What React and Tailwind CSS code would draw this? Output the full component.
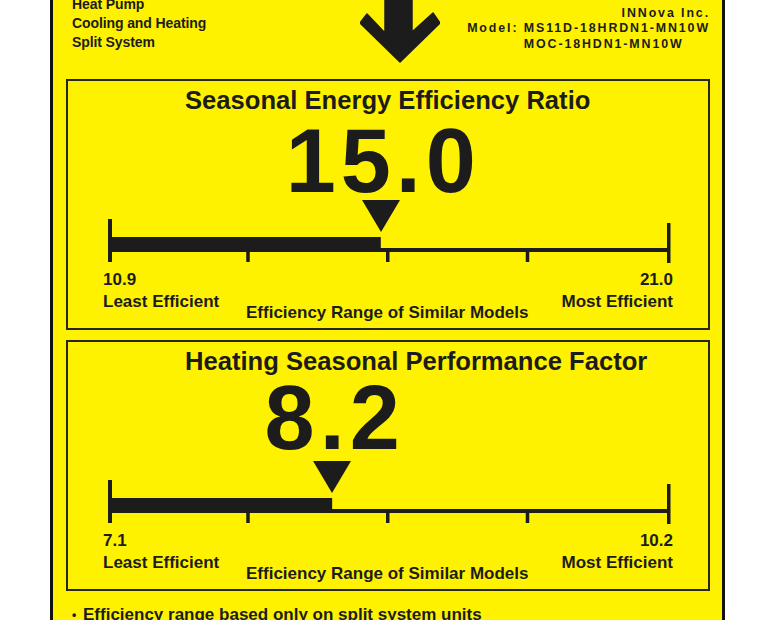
import React from 'react';

const ratings = [
  { id: 'seer', title: 'Seasonal Energy Efficiency Ratio', value: '15.0', min: '10.9', max: '21.0', fill: 0.488, valueClass: '' },
  { id: 'hspf', title: 'Heating Seasonal Performance Factor', value: '8.2', min: '7.1', max: '10.2', fill: 0.401, valueClass: '-translate-y-[4px]' },
];

const SCALE = 559; // px between the two end ticks

function ScaleBar({ fill }) {
  const ticks = [0.25, 0.5, 0.75];
  return (
    <svg className="block ml-[38px] mt-[-13px]" width="566" height="45" viewBox="0 0 566 45">
      <rect x="2" y="0" width="4" height="43" fill="#1c1c1c" />
      <rect x="561" y="4" width="3.5" height="40" fill="#1c1c1c" />
      <rect x="2" y="29" width="562" height="4" fill="#1c1c1c" />
      <rect x="2" y="18" width={fill * SCALE} height="15" fill="#1c1c1c" />
      {ticks.map((t) => (
        <rect key={t} x={2 + t * SCALE - 1.5} y="32" width="3.5" height="11" fill="#1c1c1c" />
      ))}
    </svg>
  );
}

function RatingBox({ rating, className }) {
  return (
    <div className={`ml-[13px] w-[644px] h-[251px] border-2 border-[#26261c] ${className}`}>
      {/* title */}
      <div className="pl-[117px] pt-[4px] text-[25.6px] leading-[30px] whitespace-nowrap">{rating.title}</div>

      {/* value + pointer, centred on the fill end */}
      <div className="ml-[40px] w-[559px]" style={{ paddingLeft: `${rating.fill * SCALE}px` }}>
        <div className="w-0 flex flex-col items-center mt-[6px]">
          <div className={`h-[80px] leading-[80px] text-[90px] tracking-[5px] pl-[5px] whitespace-nowrap ${rating.valueClass}`}>
            {rating.value}
          </div>
          <svg className="shrink-0 mt-[-1px]" width="38" height="32" viewBox="0 0 38 32">
            <polygon points="0,0 38,0 19,32" fill="#1c1c1c" />
          </svg>
        </div>
      </div>

      <ScaleBar fill={rating.fill} />

      {/* labels */}
      <div className="flex items-start pl-[35px] pr-[35px] mt-[5px] text-[17px] leading-[22px]">
        <div className="w-[143px] shrink-0">
          <div>{rating.min}</div>
          <div className="whitespace-nowrap">Least Efficient</div>
        </div>
        <div className="mt-[33px] whitespace-nowrap">Efficiency Range of Similar Models</div>
        <div className="flex-1" />
        <div className="text-right">
          <div>{rating.max}</div>
          <div className="whitespace-nowrap">Most Efficient</div>
        </div>
      </div>
    </div>
  );
}

export default function App() {
  return (
    <div className="w-[768px] h-[620px] bg-white overflow-hidden">
      <div className="ml-[50px] mt-[-8px] w-[675px] h-[700px] border-[3px] border-[#111] bg-[#fff200] text-[#1c1c1c] font-bold font-['Liberation_Sans',Arial,sans-serif]">
        {/* Header */}
        <div className="flex h-[84px]">
          <div className="w-[307px] shrink-0 pl-[19px] text-[14px] leading-[19px] tracking-[-0.1px]">
            <div>Heat Pump</div>
            <div>Cooling and Heating</div>
            <div>Split System</div>
          </div>
          <svg className="shrink-0" width="80" height="70" viewBox="0 0 80 70">
            <polygon
              points="25,0 52,0 52,37 73,18 80,28 40,67 0,28 7,19 25,38"
              fill="#1c1c1c"
              stroke="#1c1c1c"
              strokeWidth="1.5"
              strokeLinejoin="round"
            />
          </svg>
          <div className="flex-1 flex justify-end pr-[12px] pt-[10.6px]">
            <div className="text-[12.4px] leading-[15.5px] tracking-[1.9px]">
              <div className="text-right">INNova Inc.</div>
              <div className="flex">
                <span className="whitespace-pre">Model: </span>
                <div>
                  <div className="whitespace-nowrap">MS11D-18HRDN1-MN10W</div>
                  <div className="whitespace-nowrap">MOC-18HDN1-MN10W</div>
                </div>
              </div>
            </div>
          </div>
        </div>

        {/* Ratings */}
        <RatingBox rating={ratings[0]} className="" />
        <RatingBox rating={ratings[1]} className="mt-[10px]" />

        {/* Footnote */}
        <div className="flex items-center mt-[13px] pl-[19px] text-[17px] leading-[22px]">
          <span className="text-[12px] w-[11px]">•</span>
          <span>Efficiency range based only on split system units</span>
        </div>
      </div>
    </div>
  );
}
